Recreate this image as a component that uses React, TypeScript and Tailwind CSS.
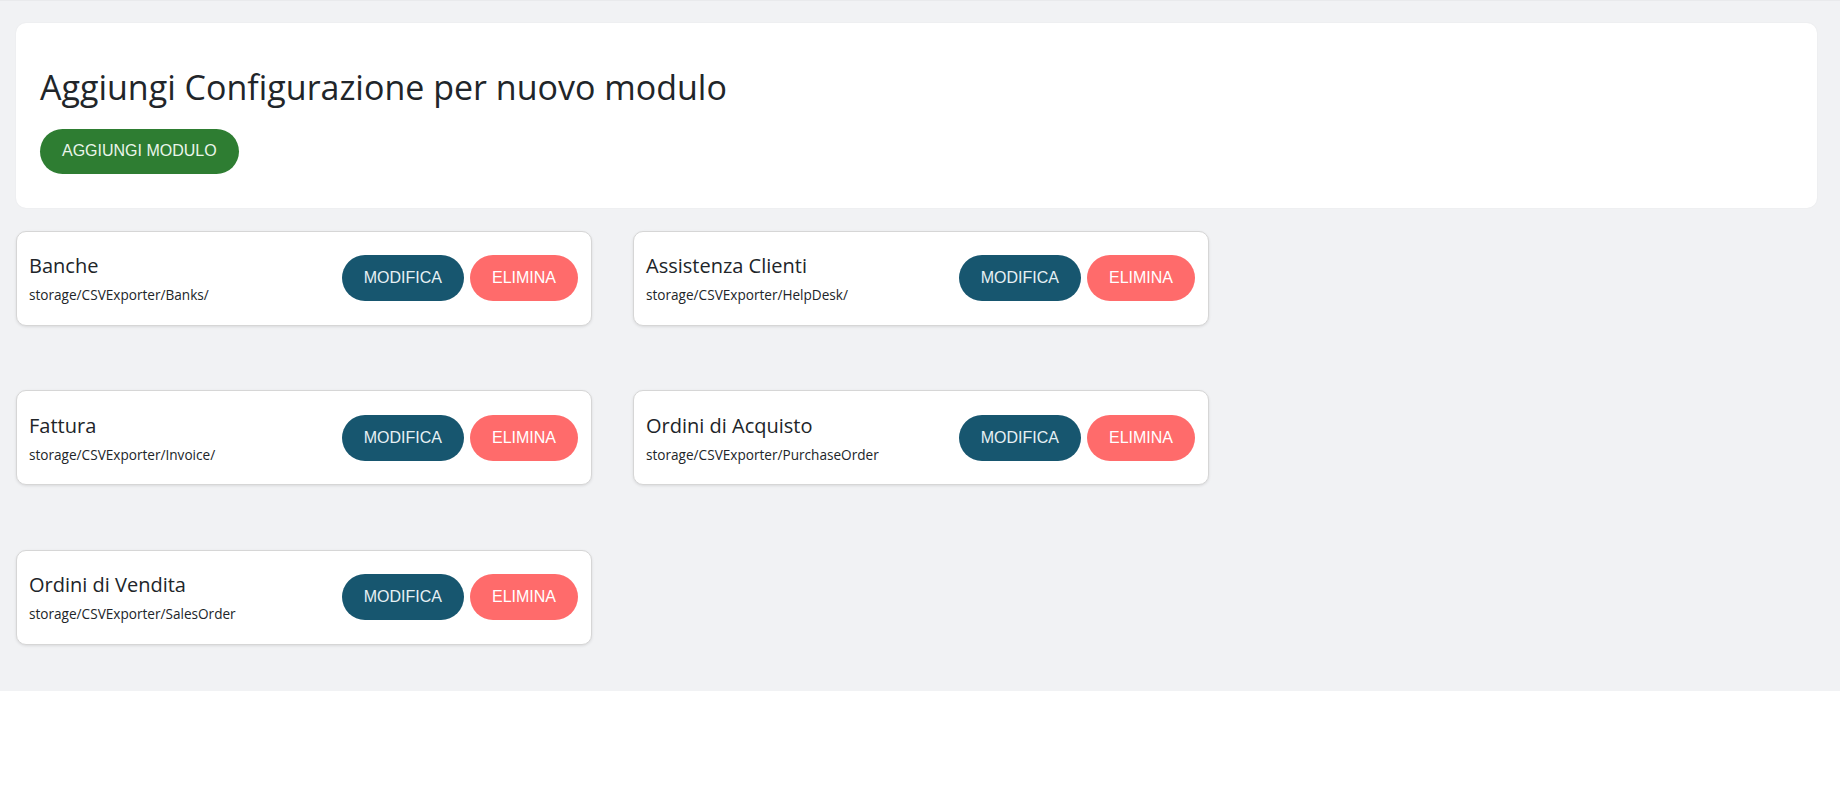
const modules = [
  { name: "Banche", path: "storage/CSVExporter/Banks/" },
  { name: "Assistenza Clienti", path: "storage/CSVExporter/HelpDesk/" },
  { name: "Fattura", path: "storage/CSVExporter/Invoice/" },
  { name: "Ordini di Acquisto", path: "storage/CSVExporter/PurchaseOrder" },
  { name: "Ordini di Vendita", path: "storage/CSVExporter/SalesOrder" },
];

function ModuleCard({ name, path }: { name: string; path: string }) {
  return (
    <div className="h-[95px] rounded-[10px] border border-[#d6d6d6] bg-white pl-[12px] pr-[13px] shadow-[0_1px_3px_rgba(0,0,0,0.1)] flex items-center justify-between">
      <div className="pt-[3px]">
        <div className="text-[20px] leading-[24px] text-[#212529] mb-[7px]">{name}</div>
        <div className="text-[13.6px] leading-[20px] text-[#212529]">{path}</div>
      </div>
      <div className="flex items-center gap-[6px] font-['Liberation_Sans',Arial,sans-serif] text-[16px]">
        <button className="h-[46px] rounded-full bg-[#17566f] px-[22px] text-[#e6f0f4]">MODIFICA</button>
        <button className="h-[46px] rounded-full bg-[#ff6b6b] px-[22px] text-white">ELIMINA</button>
      </div>
    </div>
  );
}

export default function App() {
  return (
    <div className="min-h-screen bg-white font-['Open_Sans',sans-serif]">
      <div className="bg-[#f1f2f4] border-t border-[#e9eaec] pt-[22px] pb-[46px] pl-[16px] pr-[23px]">
        <div className="rounded-[10px] bg-white px-[24px] pt-[44px] pb-[34px] shadow-[0_0_2px_rgba(0,0,0,0.06)]">
          <h1 className="text-[34px] leading-[1.2] text-[#212529]">Aggiungi Configurazione per nuovo modulo</h1>
          <button className="mt-[21px] h-[45px] rounded-full bg-[#2e7d32] px-[22px] font-['Liberation_Sans',Arial,sans-serif] text-[16px] text-[#eaf5ea]">
            AGGIUNGI MODULO
          </button>
        </div>

        <div className="mt-[23px] grid grid-cols-[576px_576px] gap-x-[41px] gap-y-[64.5px]">
          {modules.map((m) => (
            <ModuleCard key={m.name} name={m.name} path={m.path} />
          ))}
        </div>
      </div>
    </div>
  );
}
